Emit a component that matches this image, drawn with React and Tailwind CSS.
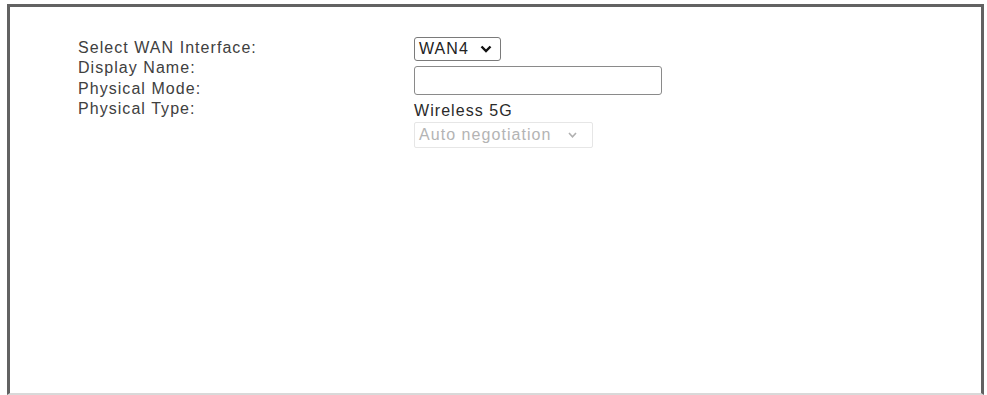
import React from "react";

export default function App() {
  const font = { fontFamily: '"Liberation Sans", Arial, sans-serif' };
  return (
    <div className="w-[987px] h-[395px] bg-white overflow-hidden" style={font}>
      <div className="ml-[7px] mt-[4px] w-[977px] h-[391px] border-l-[3px] border-t-[3px] border-r-[3px] border-b-2 border-l-[#626262] border-t-[#626262] border-r-[#626262] border-b-[#d9d9d9] flex">
        <div className="pl-[68px] pt-[31px] w-[404px] shrink-0 flex flex-col text-[16px] leading-[20.4px] tracking-[1.05px] text-[#404040]">
          <div>Select WAN Interface:</div>
          <div>Display Name:</div>
          <div>Physical Mode:</div>
          <div>Physical Type:</div>
        </div>
        <div className="pt-[30px] flex flex-col items-start text-[16px] tracking-[1.05px]">
          <div className="w-[87px] h-[24px] border border-[#7a7a7a] rounded-[3px] flex items-center pl-[4px] text-[#222] leading-none">
            <span>WAN4</span>
            <svg className="ml-[11px]" width="12" height="8" viewBox="0 0 12 8">
              <path d="M1.5 1.5 L6 6 L10.5 1.5" fill="none" stroke="#111" strokeWidth="2.4" />
            </svg>
          </div>
          <div className="mt-[5px] w-[248px] h-[29px] border border-[#8a8a8a] rounded-[3px] bg-white" />
          <div className="mt-[6px] h-[20px] leading-[20px] text-[#2a2a2a]">Wireless 5G</div>
          <div className="mt-[1px] w-[179px] h-[26px] border border-[#e6e6e6] rounded-[2px] flex items-center pl-[4px] text-[#b4b4b4] leading-none">
            <span>Auto negotiation</span>
            <svg className="ml-[17px]" width="9" height="6" viewBox="0 0 9 6">
              <path d="M1 1 L4.5 4.8 L8 1" fill="none" stroke="#b0b0b0" strokeWidth="1.6" />
            </svg>
          </div>
        </div>
      </div>
    </div>
  );
}
